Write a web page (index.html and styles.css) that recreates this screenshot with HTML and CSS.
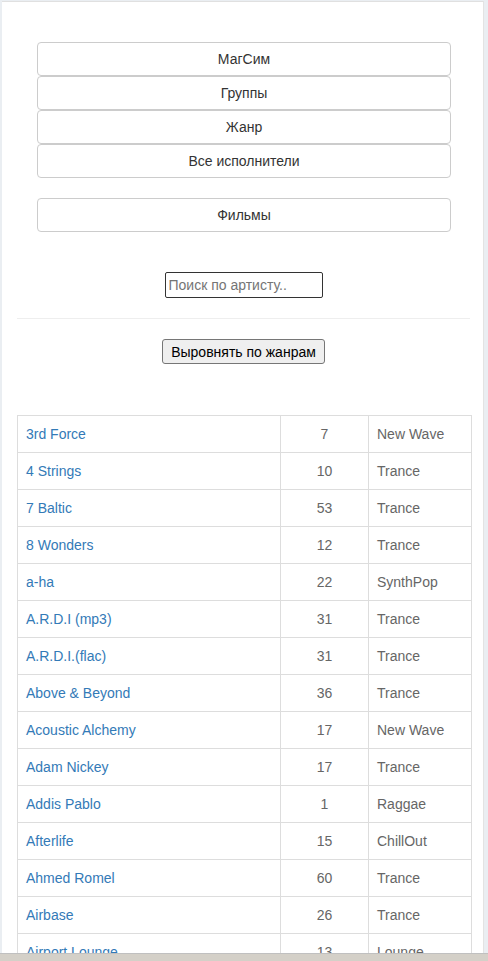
FILE: index.html
```html
<!DOCTYPE html>
<html lang="ru">
<head>
<meta charset="utf-8">
<title>Исполнители</title>
<link rel="stylesheet" href="styles.css">
</head>
<body>
<div class="page">
  <nav class="menu">
    <div class="menu-group">
      <a class="btn" href="#">МагСим</a>
      <a class="btn" href="#">Группы</a>
      <a class="btn" href="#">Жанр</a>
      <a class="btn" href="#">Все исполнители</a>
    </div>
    <a class="btn" href="#">Фильмы</a>
  </nav>
  <div class="search">
    <input class="search-input" type="text" placeholder="Поиск по артисту..">
  </div>
  <hr class="divider">
  <div class="sort">
    <button class="sort-btn" type="button">Выровнять по жанрам</button>
  </div>
  <table class="artists">
    <colgroup>
      <col class="c-name"><col class="c-count"><col class="c-genre">
    </colgroup>
    <tbody>
      <tr><td><a href="#">3rd Force</a></td><td class="num">7</td><td>New Wave</td></tr>
      <tr><td><a href="#">4 Strings</a></td><td class="num">10</td><td>Trance</td></tr>
      <tr><td><a href="#">7 Baltic</a></td><td class="num">53</td><td>Trance</td></tr>
      <tr><td><a href="#">8 Wonders</a></td><td class="num">12</td><td>Trance</td></tr>
      <tr><td><a href="#">a-ha</a></td><td class="num">22</td><td>SynthPop</td></tr>
      <tr><td><a href="#">A.R.D.I (mp3)</a></td><td class="num">31</td><td>Trance</td></tr>
      <tr><td><a href="#">A.R.D.I.(flac)</a></td><td class="num">31</td><td>Trance</td></tr>
      <tr><td><a href="#">Above &amp; Beyond</a></td><td class="num">36</td><td>Trance</td></tr>
      <tr><td><a href="#">Acoustic Alchemy</a></td><td class="num">17</td><td>New Wave</td></tr>
      <tr><td><a href="#">Adam Nickey</a></td><td class="num">17</td><td>Trance</td></tr>
      <tr><td><a href="#">Addis Pablo</a></td><td class="num">1</td><td>Raggae</td></tr>
      <tr><td><a href="#">Afterlife</a></td><td class="num">15</td><td>ChillOut</td></tr>
      <tr><td><a href="#">Ahmed Romel</a></td><td class="num">60</td><td>Trance</td></tr>
      <tr><td><a href="#">Airbase</a></td><td class="num">26</td><td>Trance</td></tr>
      <tr><td><a href="#">Airport Lounge</a></td><td class="num">13</td><td>Lounge</td></tr>
    </tbody>
  </table>
</div>
<div class="hscroll"></div>
</body>
</html>
```
FILE: styles.css
```css
html {
  overflow: hidden;
}
body {
  margin: 0;
  background: #eaeef2;
  font-family: "Liberation Sans", Arial, sans-serif;
  font-size: 14px;
  line-height: 20px;
  color: #333;
}
.page {
  margin: 1px 0 0 2px;
  width: 482px;
  box-sizing: border-box;
  background: #fff;
  border-top: 1px solid #e0e0e0;
  border-right: 1px solid #e3e3e3;
  padding: 40px 13px 0 15px;
  min-height: 1000px;
}
.menu {
  display: flex;
  flex-direction: column;
  gap: 20px;
  padding: 0 19px 0 20px;
}
.menu-group {
  display: flex;
  flex-direction: column;
}
.btn {
  display: block;
  height: 34px;
  box-sizing: border-box;
  padding: 6px 12px;
  border: 1px solid #ccc;
  border-radius: 4px;
  background: #fff;
  color: #333;
  text-align: center;
  text-decoration: none;
  font-size: 14px;
  line-height: 20px;
}
.search {
  display: flex;
  justify-content: center;
  margin-top: 40px;
}
.search-input {
  width: 158px;
  height: 26px;
  box-sizing: border-box;
  margin: 0;
  padding: 1px 3px;
  border: 1px solid #333;
  border-radius: 2px;
  font-family: "Liberation Sans", Arial, sans-serif;
  font-size: 14px;
  color: #333;
}
.search-input::placeholder {
  color: #757575;
}
.divider {
  margin: 20px 0 0 0;
  border: 0;
  border-top: 1px solid #eee;
  height: 0;
}
.sort {
  display: flex;
  justify-content: center;
  margin-top: 20px;
}
.sort-btn {
  height: 25px;
  box-sizing: border-box;
  margin: 0;
  padding: 1px 8px;
  border: 1px solid #767676;
  border-radius: 3px;
  background: #efefef;
  color: #000;
  font-family: "Liberation Sans", Arial, sans-serif;
  font-size: 14px;
}
.artists {
  margin-top: 51px;
  width: 454px;
  table-layout: fixed;
  border-collapse: collapse;
  border: 1px solid #ddd;
}
.c-name { width: 263px; }
.c-count { width: 88px; }
.c-genre { width: 103px; }
.artists td {
  border: 1px solid #ddd;
  padding: 8px;
  height: 20px;
  line-height: 20px;
  color: #666;
  white-space: nowrap;
  overflow: hidden;
}
.artists td.num {
  text-align: center;
}
.artists a {
  color: #337ab7;
  text-decoration: none;
}
.hscroll {
  position: fixed;
  left: 0;
  right: 0;
  bottom: 0;
  height: 7px;
  background: #d4d0c8;
  border-top: 1px solid #c0c0c0;
}
```
